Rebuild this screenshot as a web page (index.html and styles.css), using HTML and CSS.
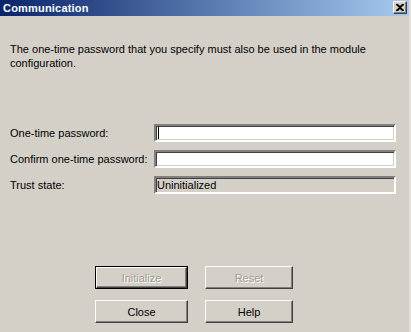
FILE: index.html
```html
<!DOCTYPE html>
<html lang="en">
<head>
    <meta charset="UTF-8">
    <title>Communication</title>
    <link rel="stylesheet" href="styles.css">
</head>
<body>
    <div class="dialog">
        <div class="titlebar">
            <span class="title">Communication</span>
            <span class="close-btn">
                <svg width="8" height="7" viewBox="0 0 8 7"><path d="M0 0h2l2 2 2-2h2v1L5 3.5 8 6v1H6L4 5 2 7H0V6l3-2.5L0 1z" fill="#000"/></svg>
            </span>
        </div>

        <p class="intro">The one-time password that you specify must also be used in the module configuration.</p>

        <div class="form">
            <label class="label">One-time password:</label>
            <div class="field focused"><span class="caret"></span></div>
            <label class="label">Confirm one-time password:</label>
            <div class="field"></div>
            <label class="label">Trust state:</label>
            <div class="field disabled">Uninitialized</div>
        </div>

        <div class="buttons">
            <button class="btn default" disabled>Initialize</button>
            <button class="btn" disabled>Reset</button>
            <button class="btn">Close</button>
            <button class="btn">Help</button>
        </div>
    </div>
</body>
</html>
```

FILE: styles.css
```css
body {
    margin: 0;
    background: #d4d0c8;
    font-family: "Liberation Sans", Arial, sans-serif;
    font-size: 11px;
    color: #000;
}
.dialog {
    width: 409px;
    height: 332px;
    border-right: 2px solid #e2dfd9;
    box-sizing: content-box;
}
.titlebar {
    height: 16px;
    background: linear-gradient(to right, #0a246a, #a6caf0);
    display: flex;
    align-items: center;
    justify-content: space-between;
    padding: 0 2px 0 3px;
}
.title {
    color: #fff;
    font-weight: bold;
    font-size: 11px;
    letter-spacing: 0.2px;
}
.close-btn {
    width: 12px;
    height: 11px;
    background: #d4d0c8;
    border: 1px solid;
    border-color: #fff #404040 #404040 #fff;
    box-shadow: inset -1px -1px 0 #808080;
    display: flex;
    align-items: center;
    justify-content: center;
    margin-top: -1px;
}
.intro {
    margin: 26px 20px 0 10px;
    line-height: 14px;
}
.form {
    display: grid;
    grid-template-columns: 144px 242px;
    row-gap: 8px;
    margin: 54px 0 0 10px;
    align-items: center;
}
.field {
    height: 12px;
    background: #fff;
    border: 2px solid;
    border-color: #808080 #fff #fff #808080;
    box-shadow: inset 1px 1px 0 #404040, inset -1px -1px 0 #d4d0c8;
    padding: 1px 1px;
    line-height: 13px;
    font-size: 11px;
}
.field.disabled {
    background: #d4d0c8;
}
.caret {
    display: inline-block;
    width: 1px;
    height: 12px;
    background: #000;
    vertical-align: top;
    margin: 0 0 0 1px;
}
.label {
    white-space: nowrap;
}
.buttons {
    display: grid;
    grid-template-columns: 93px 88px;
    column-gap: 17px;
    row-gap: 11px;
    margin: 72px 0 0 95px;
}
.btn {
    height: 23px;
    background: #d4d0c8;
    border: 1px solid;
    border-color: #fff #404040 #404040 #fff;
    box-shadow: inset -1px -1px 0 #808080;
    font-family: "Liberation Sans", Arial, sans-serif;
    font-size: 11px;
    color: #000;
    padding: 0;
}
.btn:disabled {
    color: #a09c94;
    text-shadow: 1px 1px 0 #fff;
}
.btn.default {
    outline: 1px solid #000;
    height: 21px;
    width: 91px;
    margin: 1px;
}
```
